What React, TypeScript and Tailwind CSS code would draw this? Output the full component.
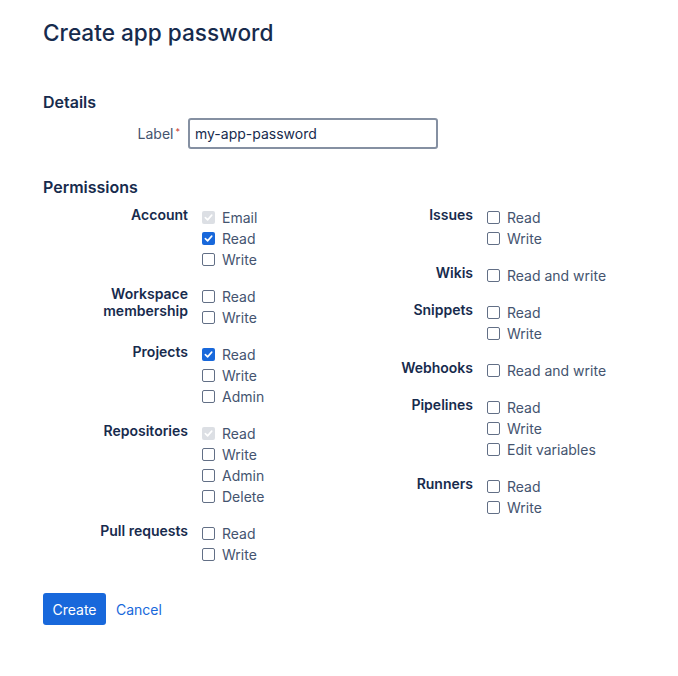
import React from 'react';

type Opt = { label: string; checked?: boolean; disabled?: boolean };
type Group = { title: string[]; options: Opt[] };

const left: Group[] = [
    { title: ['Account'], options: [{ label: 'Email', checked: true, disabled: true }, { label: 'Read', checked: true }, { label: 'Write' }] },
    { title: ['Workspace', 'membership'], options: [{ label: 'Read' }, { label: 'Write' }] },
    { title: ['Projects'], options: [{ label: 'Read', checked: true }, { label: 'Write' }, { label: 'Admin' }] },
    { title: ['Repositories'], options: [{ label: 'Read', checked: true, disabled: true }, { label: 'Write' }, { label: 'Admin' }, { label: 'Delete' }] },
    { title: ['Pull requests'], options: [{ label: 'Read' }, { label: 'Write' }] },
];

const right: Group[] = [
    { title: ['Issues'], options: [{ label: 'Read' }, { label: 'Write' }] },
    { title: ['Wikis'], options: [{ label: 'Read and write' }] },
    { title: ['Snippets'], options: [{ label: 'Read' }, { label: 'Write' }] },
    { title: ['Webhooks'], options: [{ label: 'Read and write' }] },
    { title: ['Pipelines'], options: [{ label: 'Read' }, { label: 'Write' }, { label: 'Edit variables' }] },
    { title: ['Runners'], options: [{ label: 'Read' }, { label: 'Write' }] },
];

function Checkbox({ checked, disabled }: { checked?: boolean; disabled?: boolean }) {
    if (checked) {
        return (
            <span
                className={`flex h-[13px] w-[13px] items-center justify-center rounded-[2px] ${disabled ? 'bg-[#dcdfe4]' : 'bg-[#1868db]'}`}
            >
                <svg width="9" height="9" viewBox="0 0 10 10" fill="none">
                    <path d="M1.5 5.2 L4 7.6 L8.6 2.4" stroke="white" strokeWidth={1.8} strokeLinecap="round" strokeLinejoin="round" />
                </svg>
            </span>
        );
    }
    return <span className="block h-[13px] w-[13px] rounded-[2px] border-[1.5px] border-[#626f86] bg-white" />;
}

function PermGroup({ group }: { group: Group }) {
    return (
        <div className="flex">
            <div className="w-[145px] shrink-0 text-right text-[14px] font-semibold leading-[17px] text-[#172b4d]">
                {group.title.map((t) => (
                    <div key={t}>{t}</div>
                ))}
            </div>
            <div className="ml-[14px] flex flex-col pt-[1px]">
                {group.options.map((o) => (
                    <label key={o.label} className="flex h-[21px] items-center text-[14px] text-[#44546f]">
                        <Checkbox checked={o.checked} disabled={o.disabled} />
                        <span className="ml-[7px]">{o.label}</span>
                    </label>
                ))}
            </div>
        </div>
    );
}

export default function App() {
    return (
        <div className="min-h-[676px] bg-white pl-[43px] pt-[19px]" style={{ fontFamily: 'Inter, "Noto Sans", sans-serif' }}>
            <h1 className="text-[22.6px] font-medium leading-[28px] text-[#172b4d]">Create app password</h1>

            <h2 className="mt-[45px] text-[16px] font-semibold leading-[20px] text-[#172b4d]">Details</h2>
            <div className="mt-[6px] flex items-center">
                <div className="w-[137px] text-right text-[14px] text-[#44546f]">
                    Label<span className="relative top-[-4px] ml-[2px] text-[9px] text-[#c9372c]">*</span>
                </div>
                <div className="ml-[8px] flex h-[31px] w-[250px] items-center rounded-[3px] border-2 border-[#8590a2] px-[5px] text-[14px] text-[#172b4d]">
                    my-app-password
                </div>
            </div>

            <h2 className="mt-[28px] text-[16px] font-semibold leading-[20px] text-[#172b4d]">Permissions</h2>
            <div className="mt-[9px] flex">
                <div className="flex w-[285px] flex-col gap-[15px]">
                    {left.map((g) => (
                        <PermGroup key={g.title.join()} group={g} />
                    ))}
                </div>
                <div className="flex w-[285px] flex-col gap-[15px]">
                    {right.map((g) => (
                        <PermGroup key={g.title.join()} group={g} />
                    ))}
                </div>
            </div>

            <div className="mt-[28px] flex items-center">
                <button className="h-[32px] w-[63px] rounded-[3px] bg-[#1868db] text-[14px] font-normal text-white">Create</button>
                <button className="ml-[4px] h-[32px] px-[6px] text-[14px] font-normal text-[#1868db]">Cancel</button>
            </div>
        </div>
    );
}
